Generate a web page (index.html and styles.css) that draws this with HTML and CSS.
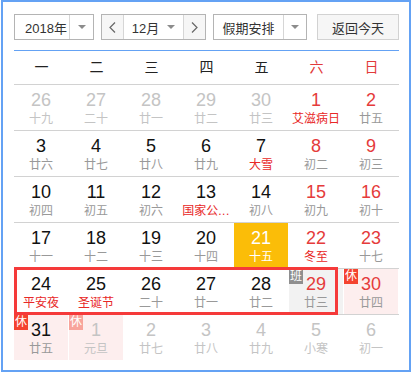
FILE: index.html
```html
<!DOCTYPE html>
<html lang="zh-CN">
<head>
<meta charset="utf-8">
<title>万年历</title>
<link rel="stylesheet" href="styles.css">
</head>
<body>
<div class="cal">
  <div class="toolbar">
    <div class="sel sel-year">
      <span class="sel-text">2018年</span>
      <span class="sel-arrow"><i class="tri"></i></span>
    </div>
    <div class="month-group">
      <span class="nav-btn"><svg width="7" height="11" viewBox="0 0 7 11"><polyline points="6,0.5 1,5.5 6,10.5" fill="none" stroke="#666" stroke-width="1.2"/></svg></span>
      <span class="month-sel">12月<i class="tri tri-m"></i></span>
      <span class="nav-btn"><svg width="7" height="11" viewBox="0 0 7 11"><polyline points="1,0.5 6,5.5 1,10.5" fill="none" stroke="#666" stroke-width="1.2"/></svg></span>
    </div>
    <div class="sel sel-holiday">
      <span class="sel-text">假期安排</span>
      <span class="sel-arrow"><i class="tri"></i></span>
    </div>
    <div class="today-btn">返回今天</div>
  </div>
  <div class="divider"></div>
  <div class="weekdays">
    <span>一</span><span>二</span><span>三</span><span>四</span><span>五</span><span class="we">六</span><span class="we">日</span>
  </div>
  <div class="days">
    <div class="cell other"><div class="in"><div class="num">26</div><div class="lunar">十九</div></div></div>
    <div class="cell other"><div class="in"><div class="num">27</div><div class="lunar">二十</div></div></div>
    <div class="cell other"><div class="in"><div class="num">28</div><div class="lunar">廿一</div></div></div>
    <div class="cell other"><div class="in"><div class="num">29</div><div class="lunar">廿二</div></div></div>
    <div class="cell other"><div class="in"><div class="num">30</div><div class="lunar">廿三</div></div></div>
    <div class="cell we"><div class="in"><div class="num">1</div><div class="lunar fest">艾滋病日</div></div></div>
    <div class="cell we"><div class="in"><div class="num">2</div><div class="lunar">廿五</div></div></div>

    <div class="cell"><div class="in"><div class="num">3</div><div class="lunar">廿六</div></div></div>
    <div class="cell"><div class="in"><div class="num">4</div><div class="lunar">廿七</div></div></div>
    <div class="cell"><div class="in"><div class="num">5</div><div class="lunar">廿八</div></div></div>
    <div class="cell"><div class="in"><div class="num">6</div><div class="lunar">廿九</div></div></div>
    <div class="cell"><div class="in"><div class="num">7</div><div class="lunar fest">大雪</div></div></div>
    <div class="cell we"><div class="in"><div class="num">8</div><div class="lunar">初二</div></div></div>
    <div class="cell we"><div class="in"><div class="num">9</div><div class="lunar">初三</div></div></div>

    <div class="cell"><div class="in"><div class="num">10</div><div class="lunar">初四</div></div></div>
    <div class="cell"><div class="in"><div class="num">11</div><div class="lunar">初五</div></div></div>
    <div class="cell"><div class="in"><div class="num">12</div><div class="lunar">初六</div></div></div>
    <div class="cell"><div class="in"><div class="num">13</div><div class="lunar fest" title="国家公祭日">国家公<span class="dots">...</span></div></div></div>
    <div class="cell"><div class="in"><div class="num">14</div><div class="lunar">初八</div></div></div>
    <div class="cell we"><div class="in"><div class="num">15</div><div class="lunar">初九</div></div></div>
    <div class="cell we"><div class="in"><div class="num">16</div><div class="lunar">初十</div></div></div>

    <div class="cell"><div class="in"><div class="num">17</div><div class="lunar">十一</div></div></div>
    <div class="cell"><div class="in"><div class="num">18</div><div class="lunar">十二</div></div></div>
    <div class="cell"><div class="in"><div class="num">19</div><div class="lunar">十三</div></div></div>
    <div class="cell"><div class="in"><div class="num">20</div><div class="lunar">十四</div></div></div>
    <div class="cell today"><div class="in"><div class="num">21</div><div class="lunar">十五</div></div></div>
    <div class="cell we"><div class="in"><div class="num">22</div><div class="lunar fest">冬至</div></div></div>
    <div class="cell we"><div class="in"><div class="num">23</div><div class="lunar">十七</div></div></div>

    <div class="cell"><div class="in"><div class="num">24</div><div class="lunar fest">平安夜</div></div></div>
    <div class="cell"><div class="in"><div class="num">25</div><div class="lunar fest">圣诞节</div></div></div>
    <div class="cell"><div class="in"><div class="num">26</div><div class="lunar">二十</div></div></div>
    <div class="cell"><div class="in"><div class="num">27</div><div class="lunar">廿一</div></div></div>
    <div class="cell"><div class="in"><div class="num">28</div><div class="lunar">廿二</div></div></div>
    <div class="cell we work"><div class="in"><span class="badge">班</span><div class="num">29</div><div class="lunar">廿三</div></div></div>
    <div class="cell we rest"><div class="in"><span class="badge">休</span><div class="num">30</div><div class="lunar">廿四</div></div></div>

    <div class="cell rest"><div class="in"><span class="badge">休</span><div class="num">31</div><div class="lunar">廿五</div></div></div>
    <div class="cell other rest"><div class="in"><span class="badge">休</span><div class="num">1</div><div class="lunar">元旦</div></div></div>
    <div class="cell other"><div class="in"><div class="num">2</div><div class="lunar">廿七</div></div></div>
    <div class="cell other"><div class="in"><div class="num">3</div><div class="lunar">廿八</div></div></div>
    <div class="cell other"><div class="in"><div class="num">4</div><div class="lunar">廿九</div></div></div>
    <div class="cell other"><div class="in"><div class="num">5</div><div class="lunar">小寒</div></div></div>
    <div class="cell other"><div class="in"><div class="num">6</div><div class="lunar">初一</div></div></div>

    <div class="week-mark"></div>
  </div>
</div>
</body>
</html>
```
FILE: styles.css
```css
html, body {
  margin: 0;
  padding: 0;
  background: #fff;
}
body {
  font-family: "Liberation Sans", "Noto Sans CJK SC", sans-serif;
  color: #333;
}
.cal {
  margin-left: 1px;
  width: 410px;
  box-sizing: border-box;
  border: 2px solid #64a2f4;
  padding: 12px 10px 10px 11px;
}
.toolbar {
  display: flex;
  height: 26px;
  font-size: 13px;
}
.sel {
  display: flex;
  box-sizing: border-box;
  height: 26px;
  border: 1px solid #b4b4b4;
  background: #fff;
}
.sel-year { width: 80px; }
.sel-year .sel-text { width: 54px; padding-left: 10px; }
.sel-holiday { width: 94px; margin-left: 7px; }
.sel-holiday .sel-text { width: 69px; justify-content: center; }
.sel-text {
  display: flex;
  align-items: center;
  box-sizing: border-box;
  color: #333;
}
.sel-arrow {
  flex: 1;
  display: flex;
  align-items: center;
  justify-content: center;
  border-left: 1px solid #d6d6d6;
}
.tri {
  display: inline-block;
  width: 0;
  height: 0;
  border-left: 4px solid transparent;
  border-right: 4px solid transparent;
  border-top: 4px solid #8c8c8c;
}
.tri-m { margin-left: 8px; }
.month-group {
  display: flex;
  box-sizing: border-box;
  width: 105px;
  height: 26px;
  margin-left: 7px;
  border: 1px solid #b4b4b4;
}
.nav-btn {
  width: 21px;
  display: flex;
  align-items: center;
  justify-content: center;
  background: #f6f6f6;
}
.month-sel {
  width: 59px;
  border-left: 1px solid #d6d6d6;
  border-right: 1px solid #d6d6d6;
  display: flex;
  align-items: center;
  justify-content: center;
  background: #fff;
  color: #333;
}
.today-btn {
  box-sizing: border-box;
  width: 82px;
  height: 26px;
  margin-left: 10px;
  border: 1px solid #d2d2d2;
  background: #f6f6f6;
  display: flex;
  align-items: center;
  justify-content: center;
  color: #333;
}
.divider {
  height: 1px;
  background: #64a2f4;
  margin-top: 10px;
}
.weekdays {
  display: grid;
  grid-template-columns: repeat(7, 55px);
  height: 33px;
  line-height: 33px;
  font-size: 14px;
  text-align: center;
  color: #222;
}
.weekdays .we { color: #e23a3a; }
.days {
  position: relative;
  display: grid;
  grid-template-columns: repeat(7, 55px);
}
.cell {
  border-top: 1px solid #d2d2d2;
  height: 45px;
  text-align: center;
}
.in {
  position: relative;
  box-sizing: border-box;
  width: 54px;
  height: 45px;
  padding-top: 5px;
}
.num {
  font-size: 18px;
  line-height: 20px;
  color: #111;
}
.lunar {
  margin-top: 2px;
  font-size: 12px;
  line-height: 14px;
  color: #999;
  white-space: nowrap;
}
.dots {
  font-family: "Liberation Sans", sans-serif;
  letter-spacing: 0.5px;
}
.lunar.fest { color: #e82727; }
.we .num { color: #e53b3b; }
.other .num { color: #c4c4c4; }
.other .lunar { color: #c4c4c4; }
.today .in { background: #fbbd08; }
.today .num, .today .lunar { color: #fff; }
.work .in { background: #f2f2f2; }
.rest .in { background: #fdeeee; }
.badge {
  position: absolute;
  left: 0;
  top: 0;
  width: 14px;
  height: 15px;
  line-height: 15px;
  font-size: 12px;
  color: #fff;
  text-align: center;
}
.rest .badge { background: #f4432f; }
.work .badge { background: #8f8f8f; }
.other.rest .badge { background: #f8a49b; }
.week-mark {
  position: absolute;
  left: 0;
  top: 183px;
  width: 324px;
  height: 48px;
  box-sizing: border-box;
  border: 3px solid #f53a3a;
  pointer-events: none;
}
```
